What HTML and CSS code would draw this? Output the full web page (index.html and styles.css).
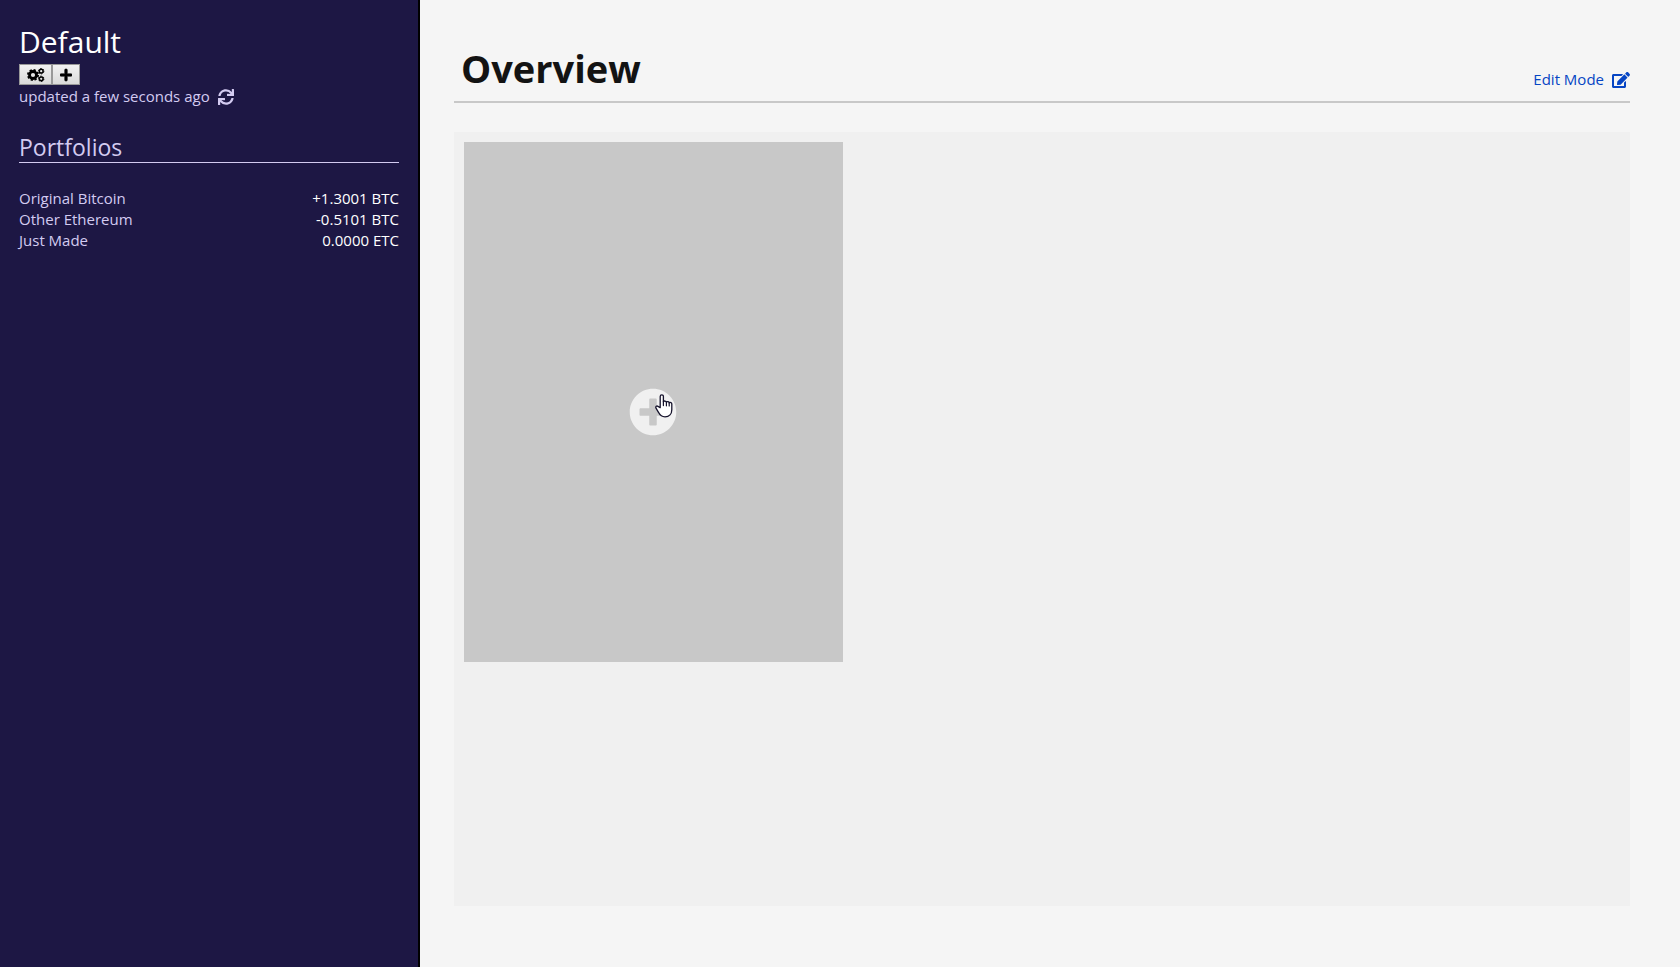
FILE: index.html
```html
<!DOCTYPE html>
<html lang="en">
<head>
<meta charset="utf-8">
<title>Overview</title>
<link rel="stylesheet" href="styles.css">
</head>
<body>
<div class="app">
  <aside class="sidebar">
    <h2 class="profile-name">Default</h2>
    <div class="profile-actions">
      <button class="tool-button tool-settings" type="button" aria-label="Settings">
        <svg class="icon-cogs" viewBox="0 0 18 14" aria-hidden="true">
          <circle cx="6" cy="7" r="3.5" fill="none" stroke="currentColor" stroke-width="2.8"/>
          <circle cx="6" cy="7" r="5.1" fill="none" stroke="currentColor" stroke-width="1.8" stroke-dasharray="2.2 1.8"/>
          <circle cx="14.2" cy="3.2" r="1.9" fill="none" stroke="currentColor" stroke-width="1.5"/>
          <circle cx="14.2" cy="3.2" r="2.7" fill="none" stroke="currentColor" stroke-width="1" stroke-dasharray="1.5 1.33"/>
          <circle cx="14.2" cy="10.8" r="1.9" fill="none" stroke="currentColor" stroke-width="1.5"/>
          <circle cx="14.2" cy="10.8" r="2.7" fill="none" stroke="currentColor" stroke-width="1" stroke-dasharray="1.5 1.33"/>
        </svg>
      </button>
      <button class="tool-button" type="button" aria-label="Add">
        <svg class="icon-plus" viewBox="0 0 448 512" aria-hidden="true"><path fill="currentColor" d="M416 208H272V64c0-17.67-14.33-32-32-32h-32c-17.67 0-32 14.33-32 32v144H32c-17.67 0-32 14.33-32 32v32c0 17.67 14.33 32 32 32h144v144c0 17.67 14.33 32 32 32h32c17.67 0 32-14.33 32-32V304h144c17.67 0 32-14.33 32-32v-32c0-17.67-14.33-32-32-32z" stroke="currentColor" stroke-width="20"/></svg>
      </button>
    </div>
    <div class="status">
      <span>updated a few seconds ago</span>
      <button class="refresh" type="button" aria-label="Refresh">
        <svg class="icon-sync" viewBox="0 0 512 512" aria-hidden="true"><path fill="currentColor" d="M440.65 12.57l4 82.77A247.16 247.16 0 0 0 255.83 8C134.73 8 33.91 94.92 12.29 209.82A12 12 0 0 0 24.09 224h49.05a12 12 0 0 0 11.67-9.26 175.91 175.91 0 0 1 317-56.94l-101.46-4.86a12 12 0 0 0-12.57 12v47.41a12 12 0 0 0 12 12H500a12 12 0 0 0 12-12V12a12 12 0 0 0-12-12h-47.37a12 12 0 0 0-11.98 12.57zM255.83 432a175.61 175.61 0 0 1-146-77.8l101.8 4.87a12 12 0 0 0 12.57-12v-47.4a12 12 0 0 0-12-12H12a12 12 0 0 0-12 12V500a12 12 0 0 0 12 12h47.35a12 12 0 0 0 12-12.6l-4.15-82.57A247.17 247.17 0 0 0 255.83 504c121.11 0 221.93-86.92 243.55-201.82a12 12 0 0 0-11.8-14.18h-49.05a12 12 0 0 0-11.67 9.26A175.86 175.86 0 0 1 255.83 432z"/></svg>
      </button>
    </div>
    <h3 class="section-title">Portfolios</h3>
    <ul class="portfolios">
      <li class="portfolio"><span>Original Bitcoin</span><span class="amount">+1.3001 BTC</span></li>
      <li class="portfolio"><span>Other Ethereum</span><span class="amount">-0.5101 BTC</span></li>
      <li class="portfolio"><span>Just Made</span><span class="amount">0.0000 ETC</span></li>
    </ul>
  </aside>
  <main class="main">
    <header class="page-header">
      <h1 class="page-title">Overview</h1>
      <a class="edit-link" href="#edit">
        <span>Edit Mode</span>
        <svg class="icon-edit" viewBox="0 0 576 512" aria-hidden="true"><path fill="currentColor" d="M402.6 83.2l90.2 90.2c3.8 3.8 3.8 10 0 13.8L274.4 405.6l-92.8 10.3c-12.4 1.4-22.9-9.1-21.5-21.5l10.3-92.8L388.8 83.2c3.8-3.8 10-3.8 13.8 0zm162-22.9l-48.8-48.8c-15.2-15.2-39.9-15.2-55.2 0l-35.4 35.4c-3.8 3.8-3.8 10 0 13.8l90.2 90.2c3.8 3.8 10 3.8 13.8 0l35.4-35.4c15.2-15.3 15.2-40 0-55.2zM384 346.2V448H64V128h229.8c3.2 0 6.2-1.3 8.5-3.5l40-40c7.6-7.6 2.2-20.5-8.5-20.5H48C21.5 64 0 85.5 0 112v352c0 26.5 21.5 48 48 48h352c26.5 0 48-21.5 48-48V306.2c0-10.7-12.9-16-20.5-8.5l-40 40c-2.2 2.3-3.5 5.3-3.5 8.5z"/></svg>
      </a>
    </header>
    <section class="board">
      <button class="add-card" type="button" aria-label="Add widget">
        <span class="add-mark">
          <svg class="icon-add" viewBox="0 0 512 512" aria-hidden="true"><path fill="currentColor" d="M256 8C119 8 8 119 8 256s111 248 248 248 248-111 248-248S393 8 256 8zm144 276c0 6.6-5.4 12-12 12h-92v92c0 6.6-5.4 12-12 12h-56c-6.6 0-12-5.4-12-12v-92h-92c-6.6 0-12-5.4-12-12v-56c0-6.6 5.4-12 12-12h92v-92c0-6.6 5.4-12 12-12h56c6.6 0 12 5.4 12 12v92h92c6.6 0 12 5.4 12 12v56z"/></svg>
          <svg class="pointer" viewBox="0 0 18 24" aria-hidden="true"><path d="M5.2 13.6V2.4a1.6 1.6 0 0 1 3.2 0v5.4c.6-1.2 2.8-1 3 .4.8-1 2.6-.6 2.8.6 1-.8 2.6-.2 2.6 1.2v5.8c0 4-2.6 7-6.8 7-3.4 0-5-1.6-6.2-4L1 14.2c-.8-1.6.8-2.8 2-1.8z" fill="#fff" stroke="#15122b" stroke-width="1.3" stroke-linejoin="round"/><path d="M8.4 7.6v4M11.4 8.4v3.4M14.2 9v3" fill="none" stroke="#15122b" stroke-width="1.2" stroke-linecap="round"/></svg>
        </span>
      </button>
    </section>
  </main>
</div>
</body>
</html>
```
FILE: styles.css
```css
* {
  box-sizing: border-box;
}

body {
  margin: 0;
  font-family: "Segoe UI", "Open Sans", "Noto Sans", sans-serif;
  font-size: 15px;
  line-height: 21px;
  background: #f5f5f5;
}

h1, h2, h3, ul {
  margin: 0;
  padding: 0;
  font-weight: 400;
}

svg {
  display: block;
}

button {
  font: inherit;
  cursor: pointer;
}

.app {
  display: flex;
  min-height: 100vh;
}

.sidebar {
  flex: 0 0 25%;
  padding: 21px 19px;
  color: #d3cbf1;
  background: #1d1744;
  border-right: 2px solid #000;
}

.profile-name {
  margin-bottom: 1px;
  font-size: 30px;
  line-height: 42px;
  color: #fff;
}

.profile-actions {
  display: flex;
}

.tool-button {
  display: flex;
  align-items: center;
  justify-content: center;
  width: 28px;
  height: 21px;
  padding: 0;
  color: #000;
  background: linear-gradient(#f2f2f2, #dadada);
  border: 1px solid #999;
}

.tool-settings {
  width: 33px;
}

.icon-cogs {
  width: 18px;
  height: 14px;
}

.icon-plus {
  width: 12px;
  height: 14px;
}

.status {
  display: flex;
  align-items: center;
  gap: 8px;
  margin-top: 1px;
}

.refresh {
  padding: 0;
  color: inherit;
  background: none;
  border: 0;
}

.icon-sync {
  width: 16px;
  height: 16px;
}

.section-title {
  margin-top: 25px;
  font-size: 23px;
  line-height: 30px;
  border-bottom: 1px solid #d3cbf1;
}

.portfolios {
  margin-top: 25px;
  list-style: none;
}

.portfolio {
  display: flex;
  justify-content: space-between;
}

.amount {
  color: #fff;
}

.main {
  display: flex;
  flex: 1;
  flex-direction: column;
  padding: 42px 50px 61px 34px;
}

.page-header {
  display: flex;
  align-items: flex-end;
  justify-content: space-between;
  padding: 0 0 7px 7px;
  border-bottom: 2px solid #c8c8c8;
}

.page-title {
  font-size: 38px;
  font-weight: 700;
  line-height: 52px;
  color: #131313;
}

.edit-link {
  display: flex;
  align-items: center;
  gap: 8px;
  padding-bottom: 4px;
  color: #0645c4;
  text-decoration: none;
}

.icon-edit {
  width: 18px;
  height: 16px;
}

.board {
  display: flex;
  flex: 1;
  align-items: flex-start;
  margin-top: 29px;
  padding: 10px;
  background: #f0f0f0;
}

.add-card {
  display: flex;
  align-items: center;
  justify-content: center;
  width: 379px;
  height: 520px;
  padding: 20px 1px 0 0;
  color: #f0f0f0;
  background: #c8c8c8;
  border: 0;
}

.add-mark {
  position: relative;
}

.icon-add {
  width: 48px;
  height: 48px;
}

.pointer {
  position: absolute;
  top: 6px;
  left: 26px;
  width: 18px;
  height: 24px;
}
```
